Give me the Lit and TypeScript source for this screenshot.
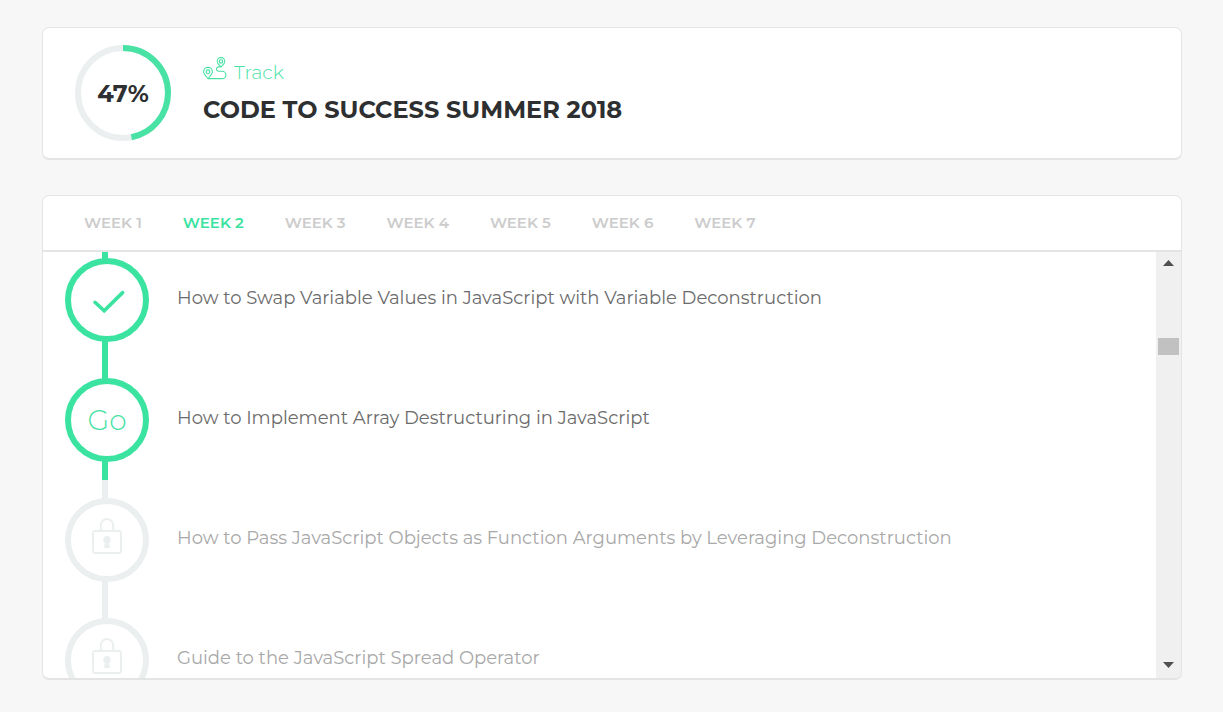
import { LitElement, html, svg, css } from "lit";
import { customElement, property, state } from "lit/decorators.js";
import { classMap } from "lit/directives/class-map.js";

type Status = "done" | "current" | "locked";

interface Lesson {
  title: string;
  status: Status;
}

const LESSONS: Lesson[] = [
  { title: "How to Swap Variable Values in JavaScript with Variable Deconstruction", status: "done" },
  { title: "How to Implement Array Destructuring in JavaScript", status: "current" },
  { title: "How to Pass JavaScript Objects as Function Arguments by Leveraging Deconstruction", status: "locked" },
  { title: "Guide to the JavaScript Spread Operator", status: "locked" },
];

const checkIcon = html`<svg class="icon" viewBox="0 0 40 40" aria-label="Completed">
  <path d="M8 22.3 L17.2 30.8 L35.6 12.6" fill="none" stroke="#3be3a1" stroke-width="3.6" stroke-linecap="round" stroke-linejoin="miter" />
</svg>`;

const lockIcon = html`<svg class="icon" viewBox="0 0 40 40" aria-label="Locked">
  <g fill="none" stroke="#ebeff0" stroke-width="2">
    <rect x="6" y="11" width="28" height="22" rx="2" />
    <path d="M13.800 11 V5.200 a6.200 6.200 0 0 1 12.400 0 V11" />
  </g>
  <circle cx="20" cy="19.700" r="3.700" fill="#ebeff0" />
  <path d="M18.200 21 H21.800 L23 28 H17 Z" fill="#ebeff0" />
</svg>`;

const trackIcon = html`<svg class="track-icon" viewBox="0 0 24 24" aria-hidden="true">
  <g fill="none" stroke="#48e2a5" stroke-width="1.1">
    <path d="M5 21.600 C2.600 18.800 .600 17 .600 14.800 a4.400 4.400 0 0 1 8.800 0 C9.400 17 7.400 18.800 5 21.600 Z" />
    <circle cx="5" cy="14.8" r="1.900" />
    <path d="M18 10 C16 7.800 14.200 6.400 14.200 4.400 a3.800 3.800 0 0 1 7.600 0 C21.800 6.400 20 7.800 18 10 Z" />
    <circle cx="18" cy="4.400" r="1.700" />
    <path d="M17.500 9.900 H15.200 a2.200 2.200 0 0 0 0 4.300 H19.200 a3.600 3.600 0 0 1 0 7.400 H5" />
  </g>
</svg>`;

@customElement("progress-ring")
export class ProgressRing extends LitElement {
  @property({ type: Number }) value = 0;

  static styles = css`
    :host {
      display: grid;
      width: 96px;
      height: 96px;
      flex: none;
    }
    svg, .value {
      grid-area: 1 / 1;
    }
    .value {
      place-self: center;
      padding-top: 2px;
      font-size: 24px;
      line-height: 32px;
      font-weight: 700;
      color: #2d2f31;
    }
  `;

  render() {
    return html`
      <svg viewBox="0 0 96 96" aria-hidden="true">
        <g fill="none" stroke-width="6" transform="rotate(-90 48 48)">
          <circle cx="48" cy="48" r="45" stroke="#ebeff0" />
          ${svg`<circle cx="48" cy="48" r="45" stroke="#48e2a5" pathLength="100" stroke-dasharray="${this.value} 100" />`}
        </g>
      </svg>
      <span class="value">${this.value}%</span>
    `;
  }
}

@customElement("lesson-row")
export class LessonRow extends LitElement {
  @property({ type: Object }) lesson!: Lesson;

  static styles = css`
    :host {
      display: block;
    }
    .row {
      display: grid;
      grid-template-columns: 84px 1fr;
      column-gap: 28px;
      height: 120px;
      padding: 0 22px;
      color: #6b6b6b;
    }
    .rail {
      grid-area: 1 / 1;
      width: 6px;
      margin-left: 37px;
      background: #3be3a1;
    }
    .node {
      grid-area: 1 / 1;
      align-self: center;
      z-index: 1;
      display: grid;
      place-items: center;
      box-sizing: border-box;
      width: 84px;
      height: 84px;
      padding: 0;
      border: 6px solid #3be3a1;
      border-radius: 50%;
      background: #fff;
      color: #48e2a5;
      font-family: inherit;
      font-size: 28px;
      font-weight: 300;
    }
    .icon {
      width: 40px;
      height: 40px;
      overflow: visible;
    }
    .title {
      grid-area: 1 / 2;
      align-self: center;
      padding-bottom: 4px;
      color: inherit;
      text-decoration: none;
      font-size: 18px;
      line-height: 24px;
    }
    .locked {
      color: #a8a8a8;
    }
    .locked .rail {
      background: #ebeff0;
    }
    .locked .node {
      border-color: #ebeff0;
    }
  `;

  render() {
    const { title, status } = this.lesson;
    return html`
      <div class=${classMap({ row: true, locked: status === "locked" })}>
        <span class="rail"></span>
        ${status === "current"
          ? html`<button class="node" type="button">Go</button>`
          : html`<span class="node">${status === "done" ? checkIcon : lockIcon}</span>`}
        <a class="title" href="#">${title}</a>
      </div>
    `;
  }
}

@customElement("app-root")
export class AppRoot extends LitElement {
  @state() private week = 2;

  static styles = css`
    :host {
      display: flex;
      flex-direction: column;
      gap: 35px;
      box-sizing: border-box;
      height: 100vh;
      padding: 27px 41px 32px 42px;
      background: #f7f7f7;
      font-family: Montserrat, Inter, sans-serif;
      color: #2d2f31;
    }
    .card {
      border: 1px solid #e4e4e4;
      border-bottom-width: 2px;
      border-radius: 7px;
      background: #fff;
    }
    .summary {
      display: flex;
      align-items: center;
      gap: 32px;
      padding: 17px 32px;
    }
    .kind {
      display: flex;
      align-items: center;
      gap: 7px;
      font-size: 19px;
      line-height: 34px;
      font-weight: 300;
      color: #48e2a5;
    }
    .track-icon {
      width: 24px;
      height: 24px;
      margin-bottom: 8px;
    }
    h1 {
      margin: 0;
      font-size: 24px;
      line-height: 40px;
      font-weight: 700;
    }
    .course {
      display: flex;
      flex-direction: column;
      flex: 1;
      min-height: 0;
      overflow: hidden;
    }
    .weeks {
      display: flex;
      flex: none;
      gap: 41px;
      height: 54px;
      padding: 0 41px;
      border-bottom: 2px solid #e4e4e4;
    }
    .week {
      padding: 0 0 2px;
      border: 0;
      background: none;
      font-family: inherit;
      font-size: 15px;
      font-weight: 600;
      color: #cccccc;
    }
    .selected {
      color: #3be3a1;
    }
    .body {
      display: flex;
      flex: 1;
      min-height: 0;
    }
    .viewport {
      flex: 1;
      overflow: hidden;
    }
    .lessons {
      margin: -12px 0 0;
      padding: 0;
      list-style: none;
    }
    .scrollbar {
      display: flex;
      flex-direction: column;
      align-items: center;
      width: 25px;
      background: #f0f0f0;
    }
    .arrow {
      width: 11px;
      height: 6px;
      margin: 8px 0 10px;
      fill: #505050;
    }
    .above {
      flex: 62;
    }
    .thumb {
      width: 21px;
      height: 17px;
      background: #c1c1c1;
    }
    .below {
      flex: 299;
    }
  `;

  render() {
    return html`
      <header class="card summary">
        <progress-ring .value=${47}></progress-ring>
        <div>
          <div class="kind">${trackIcon}<span>Track</span></div>
          <h1>CODE TO SUCCESS SUMMER 2018</h1>
        </div>
      </header>
      <section class="card course">
        <nav class="weeks">
          ${[1, 2, 3, 4, 5, 6, 7].map(
            (n) => html`<button
              type="button"
              class=${classMap({ week: true, selected: n === this.week })}
              @click=${() => (this.week = n)}
            >WEEK ${n}</button>`
          )}
        </nav>
        <div class="body">
          <div class="viewport">
            <ol class="lessons">
              ${LESSONS.map((lesson) => html`<li><lesson-row .lesson=${lesson}></lesson-row></li>`)}
            </ol>
          </div>
          <div class="scrollbar" aria-hidden="true">
            <svg class="arrow" viewBox="0 0 11 6"><path d="M5.500 0 L11 6 H0 Z" /></svg>
            <span class="above"></span>
            <span class="thumb"></span>
            <span class="below"></span>
            <svg class="arrow" viewBox="0 0 11 6"><path d="M0 0 H11 L5.500 6 Z" /></svg>
          </div>
        </div>
      </section>
    `;
  }
}
